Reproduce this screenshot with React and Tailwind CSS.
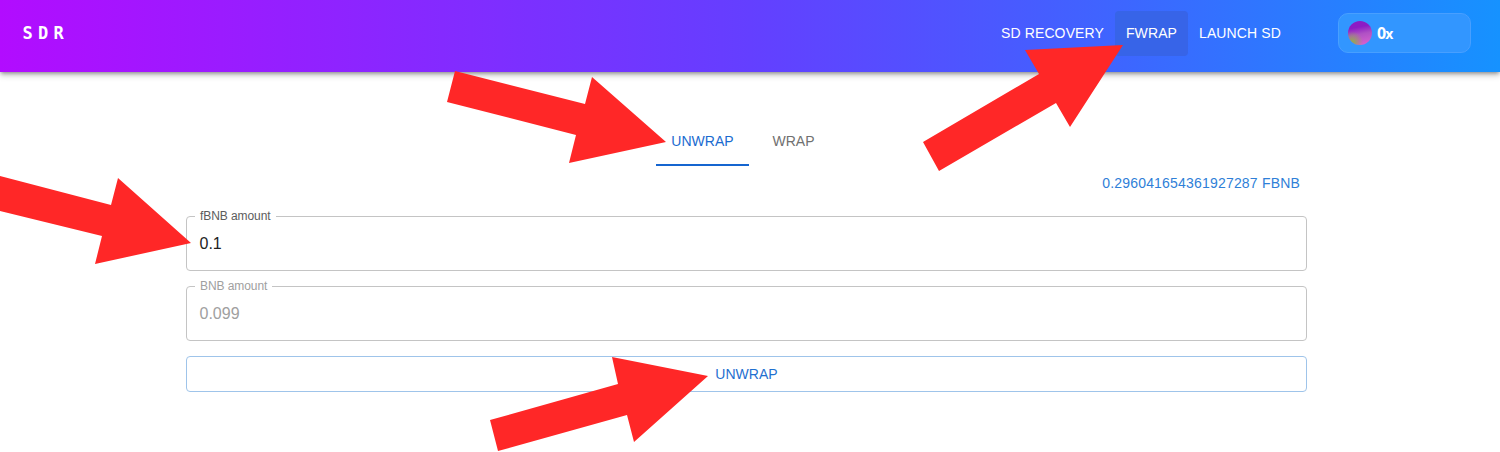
const navItems = [
  { label: 'SD RECOVERY', box: 'w-[125px]', text: 'tracking-[0.12px]' },
  { label: 'FWRAP', box: 'w-[73px] bg-[#3764e8] rounded', text: 'tracking-[0.1px]' },
  { label: 'LAUNCH SD', box: 'w-[102px] pl-[2px]', text: 'tracking-[0.12px]' },
];

const arrows = [
  '455,71 585,104 592,77 666,142 569,163 576,135 447,102',
  '-12,173 111,205 118,178 191,243 95,264 102,236 -20,206',
  '1025,50 1123,45 1070,127 1056,103 939,171 923,142 1039,74',
  '490,420 618,384 612,357 708,376 634,442 627,415 498,451',
];

function Field({ label, value, tone, labelTone, className }) {
  return (
    <div className={`relative flex h-[55px] items-center rounded border border-[#c4c4c4] px-[12.5px] ${className}`}>
      <span className={`absolute -top-[9px] left-2 bg-white px-[5px] text-[12px] leading-4 tracking-[-0.08px] ${labelTone}`}>
        {label}
      </span>
      <span className={`text-[16px] leading-6 ${tone}`}>{value}</span>
    </div>
  );
}

export default function App() {
  return (
    <div className="relative h-[452px] w-[1500px] overflow-hidden bg-white font-['Liberation_Sans',Arial,sans-serif]">
      <header className="flex h-[72px] items-start bg-linear-[90deg,#b20cff,#643fff_50%,#3d66ff_75%,#1692ff] text-white shadow-[0_2px_4px_-1px_rgba(0,0,0,0.4),0_4px_6px_rgba(0,0,0,0.16)]">
        <div className="mt-[21px] ml-[22.5px] font-['DejaVu_Sans_Mono',monospace] text-[17px] leading-6 font-bold tracking-[5.3px]">SDR</div>
        <nav className="mt-[11px] ml-auto flex">
          {navItems.map((item) => (
            <div key={item.label} className={`flex h-[45px] items-center justify-center text-[14px] whitespace-nowrap ${item.box} ${item.text}`}>
              {item.label}
            </div>
          ))}
        </nav>
        <div className="mt-[13px] mr-[29px] ml-[48px] flex h-10 w-[133px] items-center rounded-[10px] border border-[#489fff] bg-[#3296ff] pl-[9px]">
          <svg className="size-6" viewBox="0 0 24 24">
            <defs>
              <linearGradient id="orb" x1="0.4" y1="0" x2="0.6" y2="1">
                <stop offset="0.25" stopColor="#8c1cc4" />
                <stop offset="0.55" stopColor="#b052c4" />
                <stop offset="1" stopColor="#d660d0" />
              </linearGradient>
              <radialGradient id="moss" cx="0.18" cy="0.88" r="0.45">
                <stop offset="0" stopColor="#8fae4c" />
                <stop offset="1" stopColor="#8fae4c" stopOpacity="0" />
              </radialGradient>
            </defs>
            <circle cx="12" cy="12" r="12" fill="url(#orb)" />
            <circle cx="12" cy="12" r="12" fill="url(#moss)" />
          </svg>
          <span className="ml-[5px] font-['Noto_Sans',sans-serif] text-[16px] leading-5 font-bold tracking-[-1px]">
            0<span className="text-[14px]">x</span>
          </span>
        </div>
      </header>

      <main className="ml-[186px] flex w-[1121px] flex-col">
        <div className="mt-[46px] ml-[470px] flex h-[48px] text-[14px] tracking-[0.05px]">
          <div className="flex w-[93px] items-center justify-center border-b-2 border-[#1565d0] text-[#1a6bd0]">UNWRAP</div>
          <div className="flex w-[89px] items-center justify-center border-b-2 border-transparent text-[#707070]">WRAP</div>
        </div>
        <div className="mt-[7px] mr-[7px] self-end text-[14px] leading-5 tracking-[0.19px] text-[#2f7fd8]">0.296041654361927287 FBNB</div>
        <Field label="fBNB amount" value="0.1" tone="text-[#222]" labelTone="text-[#5c5c5c]" className="mt-[23px]" />
        <Field label="BNB amount" value="0.099" tone="text-[#a0a0a0]" labelTone="text-[#a0a0a0]" className="mt-[15px]" />
        <button className="mt-[15px] h-9 rounded border border-[#9fc4ea] text-[14px] tracking-[0.05px] text-[#1f70d0]">UNWRAP</button>
      </main>

      <svg className="absolute inset-0 h-[452px] w-[1500px]" viewBox="0 0 1500 452" fill="#ff2727">
        {arrows.map((points) => (
          <polygon key={points} points={points} />
        ))}
      </svg>
    </div>
  );
}
